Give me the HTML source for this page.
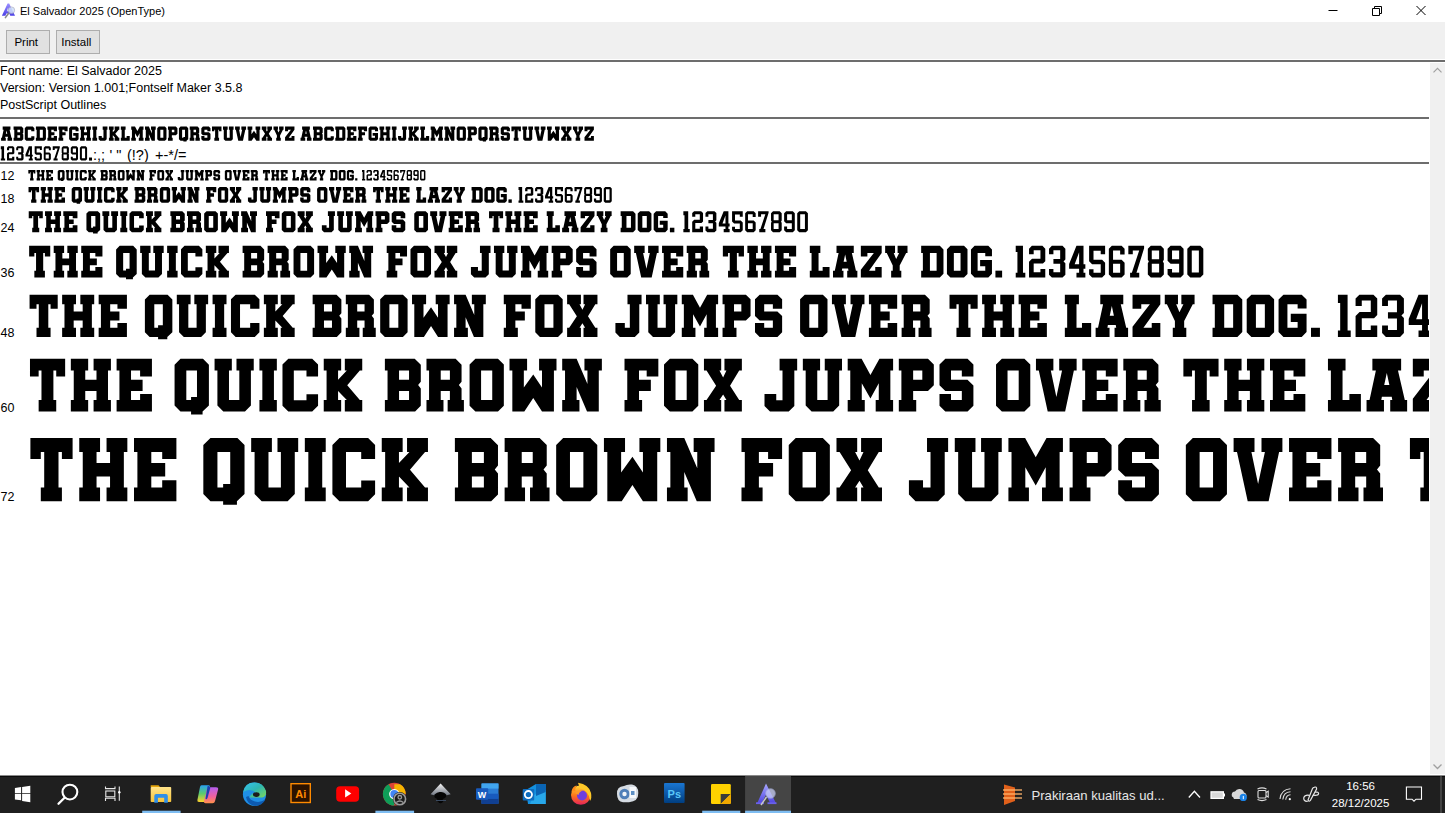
<!DOCTYPE html>
<html><head><meta charset="utf-8">
<style>
*{box-sizing:border-box}
html,body{margin:0;padding:0}
body{width:1445px;height:813px;position:relative;overflow:hidden;background:#fff;font-family:"Liberation Sans",sans-serif;color:#000}
.abs{position:absolute}
#title{left:0;top:0;width:1445px;height:22px;background:#fff}
#ttext{left:20px;top:4px;font-size:11px;line-height:14px;white-space:nowrap}
#toolbar{left:0;top:22px;width:1445px;height:37px;background:#f0f0f0}
.btn{position:absolute;top:30px;height:24px;background:#e1e1e1;border:1px solid #adadad;font-size:11.5px;line-height:22px;text-align:center;padding-right:3.5px}
.sep{position:absolute;left:0;background:#6d6d6d}
.info{position:absolute;left:0;font-size:12.5px;line-height:15px;white-space:nowrap;margin-top:1px}
.sample{position:absolute;left:0;top:63px}
.lab{position:absolute;left:0.5px;font-size:12.5px;line-height:15px;color:#000}
.punc{position:absolute;top:147px;font-size:14.5px;line-height:16px;white-space:nowrap}
#scroll{left:1430px;top:63px;width:15px;height:711px;background:#f0f0f0}
#taskbar{left:0;top:775px;width:1445px;height:38px;background:#1f1f1f;border-top:1px solid #8a8a8a}
.tbt{position:absolute;color:#f2f2f2;font-size:12px;white-space:nowrap}
</style></head><body>
<div class="abs" id="title"></div>
<svg class="abs" style="left:0;top:0" width="20" height="20" viewBox="0 0 20 20">
<defs><linearGradient id="tia" x1="0" y1="0" x2="0" y2="1"><stop offset="0" stop-color="#9a90ff"/><stop offset="1" stop-color="#4b3fe6"/></linearGradient></defs>
<path d="M7.6,3.6H9.2L15,15.8H10.3L9.3,13.6H6.4L5.4,15.8H1.9Z" fill="url(#tia)"/>
<path d="M7.9,8L9,11.3H6.8Z" fill="#fff" opacity="0.8"/>
<circle cx="11.4" cy="10.2" r="3.3" fill="#cfe0fb" opacity="0.85" stroke="#a8a8b8" stroke-width="0.7"/>
<path d="M8.6,13.2L5.4,17.6" stroke="#8a8a8a" stroke-width="1.6" stroke-linecap="round"/>
</svg>
<div class="abs" id="ttext">El Salvador 2025 (OpenType)</div>
<svg class="abs" style="left:1320px;top:0" width="125" height="22">
<path d="M8.5,10.5H17.5" stroke="#000" stroke-width="1"/>
<path d="M52.5,8.5H59.5V15.5H52.5Z M54.5,8.5V6.5H61.5V13.5H59.5" fill="none" stroke="#000" stroke-width="1"/>
<path d="M96.5,6L105.5,15M105.5,6L96.5,15" stroke="#000" stroke-width="1"/>
</svg>
<div class="abs" id="toolbar"></div>
<div class="btn" style="left:6px;width:44px">Print</div>
<div class="btn" style="left:56px;width:44px">Install</div>
<div class="sep" style="top:60px;width:1445px;height:2px"></div>
<div class="info" style="top:63px">Font name: El Salvador 2025</div>
<div class="info" style="top:80px">Version: Version 1.001;Fontself Maker 3.5.8</div>
<div class="info" style="top:97px">PostScript Outlines</div>
<div class="sep" style="top:117px;width:1429px;height:2px"></div>
<svg class="sample" width="1429" height="712" viewBox="0 63 1429 712"><defs><path id="g84" d="M0,0H42.2V21.2H31.5V14.2H28.1V49.6H31.5V63.3H10.4V49.6H13.8V14.2H10.4V21.2H0Z"/><path id="g72" d="M0,0H20.8V14.2H17.3V25.1H30.8V14.2H27.3V0H48.1V14.2H44.6V49.6H48.1V63.3H27.3V49.6H30.8V38.7H17.3V49.6H20.8V63.3H0V49.6H3.5V14.2H0Z"/><path id="g69" d="M0,0H42.4V21.2H28.2V14.2H17.3V25.1H31.2V38.7H17.3V49.6H28.2V42.4H42.4V63.3H0V49.6H3.4V14.2H0Z"/><path id="g81" d="M7.1,0H34.1L41.2,7.1V56.2L33.6,63.3V66.9H19.8V63.3H7.1L0,56.2V7.1Z M14.1,14.2H26.9V46H19.8V49.5H14.1Z"/><path id="g85" d="M0,0H20.7V14.2H17.3V49.5H29.7V14.2H26.3V0H47V14.2H43.6V56.2L36.5,63.3H10.5L3.4,56.2V14.2H0Z"/><path id="g73" d="M0,0H20.9V14.2H17.4V49.6H20.9V63.3H0V49.6H3.5V14.2H0Z"/><path id="g67" d="M7,0H35.7L42.7,7V21.2H28.8V14.2H13.6V49.7H28.8V42.6H42.7V56.3L35.7,63.3H7L0,56.3V7Z"/><path id="g75" d="M0,0H20.9V14.2H17.2V25.1L27.7,14.2H25.3V0H46.2V14.2H43.3L28.2,31.9L43.3,49.6H46.2V63.3H25.3V49.6H27.7L17.2,38.7V49.6H20.9V63.3H0V49.6H3.4V14.2H0Z"/><path id="g66" d="M0,0H35.8L43.1,7.3V27.7L39.9,31.6L43.1,35.6V56.5L36.3,63.3H0V49.6H3.2V14.2H0Z M17,14.2H29V25.1H17Z M17,38.7H29V49.6H17Z"/><path id="g82" d="M0,0H35L42.1,7.1V27.7L38.9,31.6L42.1,35.6V49.6H44.9V63.3H25.4V49.6H28.1V38.7H17.1V49.6H20.4V63.3H0V49.6H3.1V14.2H0Z M17.1,14.2H28.1V25.1H17.1Z"/><path id="g79" d="M7,0H34.1L41.1,7V56.3L34.1,63.3H7L0,56.3V7Z M13.8,14.2H27.2V49.6H13.8Z"/><path id="g87" d="M0,0H21.1V14.2H17.2V34.5L28.5,18.9L39,34.5V14.2H35.5V0H56.4V14.2H53.3V63.3H39L28.5,47.1L17.8,63.3H3.4V14.2H0Z"/><path id="g78" d="M0,0H17.3L30.3,30.4V14.2H26.7V0H47.6V14.2H43.9V63.3H29.8L17.3,34V49.6H20.7V63.3H0V49.6H3.4V14.2H0Z"/><path id="g70" d="M0,0H40.6V21.2H26.6V14.2H17.4V25.1H31.6V38.7H17.4V49.6H21.1V63.3H0V49.6H3.3V14.2H0Z"/><path id="g88" d="M0,0H20.7V14.2H18.6L23,22.5L27,14.2H24.6V0H45.5V14.2H42.3L31.3,32.4L42.3,49.6H45.5V63.3H24.6V49.6H27L23,42.9L18.6,49.6H20.7V63.3H0V49.6H3.1L14.6,32.4L3.1,14.2H0Z"/><path id="g74" d="M18.1,0H39.2V14.2H35.8V56.6L29.1,63.3H6.6L0,56.6V42.4H14.1V49.7H21.6V14.2H18.1Z"/><path id="g77" d="M0,0H16.7L27.3,19.4L38.1,0H54.5V14.2H51.2V49.6H54.5V63.3H33.6V49.6H37.3V29.3L27.3,47.6L16.9,29.3V49.6H20.5V63.3H0V49.6H3.1V14.2H0Z"/><path id="g80" d="M0,0H35L42,7V31.9L35,38.7H17.2V49.6H20.9V63.3H0V49.6H3.1V14.2H0Z M17.2,14.2H28.2V25.2H17.2Z"/><path id="g83" d="M7,0H33.7L40.7,7V21.2H26.8V14.2H13.8V25.1H33.6L40.7,32.1V56.3L33.7,63.3H7L0,56.3V42.4H13.8V49.6H26.8V38.7H7L0,31.8V7Z"/><path id="g86" d="M0,0H20.9V14.2H17.8L24.5,46L31.3,14.2H27.9V0H48.8V14.2H45.5L35,63.3H14.1L3.4,14.2H0Z"/><path id="g76" d="M0,0H21.1V14.2H17.5V49.6H25.7V42.4H39.5V63.3H0V49.6H3.5V14.2H0Z"/><path id="g65" d="M7,0H41.5V14.2H37.7L45.9,49.6H48.7V63.3H28.4V49.6H30.9L30.2,45.5H18.4L17.7,49.6H20.9V63.3H0V49.6H3.6L11.2,14.2H7Z M24.3,17.1L27.4,31.6H21.2Z"/><path id="g90" d="M0,0H41.7V14.2L16.4,49.6H28.8V42.4H41.7V63.3H0V48L26,14.2H13.1V21.2H0Z"/><path id="g89" d="M0,0H19.8V14.2H17.1L22,26.4L28,14.2H24.9V0H44.7V14.2H42L29.1,39.3V49.6H32.3V63.3H12V49.6H15.2V39.3L3.2,14.2H0Z"/><path id="g68" d="M0,0H37.3L44.6,7.3V56L37.3,63.3H0V49.6H3.4V14.2H0Z M17.5,14.2H30.9V49.6H17.5Z"/><path id="g71" d="M7.3,0H34.7L42,7.3V20.7H28.6V14.2H13.3V49.6H28.6V41H18.3V28.5H42V56L34.7,63.3H7.3L0,56V7.3Z"/><path id="g46" d="M0,49.6H13.4V63.3H0Z"/><path id="g49" d="M0,0H14.5V53.7H19.2V63.3H0V53.7H3.4V12.5H0Z"/><path id="g50" d="M5.7,0H26.8L32.5,5.7V30.6L27.8,35.3H9.3V53H22.8V46.2H32.5V63.3H0V31.9L6,25.9H22.8V8.8H9.3V16.8H0V5.7Z"/><path id="g51" d="M5.7,0H27L32.7,5.7V27.5L29,31.2L32.7,34.9V57.6L27,63.3H5.7L0,57.6V46.2H8.8V53H22.3V35.8H8.8V26.5H22.3V8.8H8.8V16.8H0V5.7Z"/><path id="g52" d="M14.7,0H28.8V36.9H32.5V45.6H28.8V53.7H32.5V63.3H14.7V53.7H20V45.6H0V36.3Z M20,12.9V36.9H11.1Z"/><path id="g53" d="M0,0H32V16.7H23.2V9.8H8.8V27.6H26L32,33.6V57.3L26,63.3H6L0,57.3V46.8H8.8V53.6H23.2V36.9H6L0,30.9Z"/><path id="g54" d="M6,0H25.5L31.5,6V17.2H22.6V9.3H8.4V27.6H25.5L31.5,33.6V57.3L25.5,63.3H6L0,57.3V6Z M8.4,35.9H22.6V53.6H8.4Z"/><path id="g55" d="M0,0H31.5V5L16.3,53.6H21.8V63.3H3.5V53.6H7L21.7,9.3H8.9V16.7H0Z"/><path id="g56" d="M6,0H26L32,6V28L30,31.5L32,35V57.3L26,63.3H6L0,57.3V35L2,31.5L0,28V6Z M7.9,9.4H22.6V27H7.9Z M7.9,36H22.6V53.2H7.9Z"/><path id="g57" d="M6,0H26L32,6V57.3L26,63.3H6L0,57.3V46.2H8.9V53.2H23.1V36H6L0,30V6Z M8.9,9.4H23.1V27H8.9Z"/><path id="g48" d="M6,0H26L32,6V57.3L26,63.3H6L0,57.3V6Z M8.9,9.4H23.1V53.2H8.9Z"/></defs><g fill="#000" fill-rule="evenodd"><use href="#g65" transform="translate(1.10,126.56) scale(0.2250)"/><use href="#g66" transform="translate(13.57,126.56) scale(0.2250)"/><use href="#g67" transform="translate(24.77,126.56) scale(0.2250)"/><use href="#g68" transform="translate(35.89,126.56) scale(0.2250)"/><use href="#g69" transform="translate(47.43,126.56) scale(0.2250)"/><use href="#g70" transform="translate(58.48,126.56) scale(0.2250)"/><use href="#g71" transform="translate(69.12,126.56) scale(0.2250)"/><use href="#g72" transform="translate(80.08,126.56) scale(0.2250)"/><use href="#g73" transform="translate(92.41,126.56) scale(0.2250)"/><use href="#g74" transform="translate(98.61,126.56) scale(0.2250)"/><use href="#g75" transform="translate(108.94,126.56) scale(0.2250)"/><use href="#g76" transform="translate(120.84,126.56) scale(0.2250)"/><use href="#g77" transform="translate(131.24,126.56) scale(0.2250)"/><use href="#g78" transform="translate(145.01,126.56) scale(0.2250)"/><use href="#g79" transform="translate(157.23,126.56) scale(0.2250)"/><use href="#g80" transform="translate(167.98,126.56) scale(0.2250)"/><use href="#g81" transform="translate(178.94,126.56) scale(0.2250)"/><use href="#g82" transform="translate(189.72,126.56) scale(0.2250)"/><use href="#g83" transform="translate(201.33,126.56) scale(0.2250)"/><use href="#g84" transform="translate(211.99,126.56) scale(0.2250)"/><use href="#g85" transform="translate(223.00,126.56) scale(0.2250)"/><use href="#g86" transform="translate(235.08,126.56) scale(0.2250)"/><use href="#g87" transform="translate(247.57,126.56) scale(0.2250)"/><use href="#g88" transform="translate(261.76,126.56) scale(0.2250)"/><use href="#g89" transform="translate(273.51,126.56) scale(0.2250)"/><use href="#g90" transform="translate(285.07,126.56) scale(0.2250)"/><use href="#g65" transform="translate(300.53,126.56) scale(0.2250)"/><use href="#g66" transform="translate(313.00,126.56) scale(0.2250)"/><use href="#g67" transform="translate(324.20,126.56) scale(0.2250)"/><use href="#g68" transform="translate(335.31,126.56) scale(0.2250)"/><use href="#g69" transform="translate(346.86,126.56) scale(0.2250)"/><use href="#g70" transform="translate(357.91,126.56) scale(0.2250)"/><use href="#g71" transform="translate(368.55,126.56) scale(0.2250)"/><use href="#g72" transform="translate(379.50,126.56) scale(0.2250)"/><use href="#g73" transform="translate(391.83,126.56) scale(0.2250)"/><use href="#g74" transform="translate(398.04,126.56) scale(0.2250)"/><use href="#g75" transform="translate(408.37,126.56) scale(0.2250)"/><use href="#g76" transform="translate(420.27,126.56) scale(0.2250)"/><use href="#g77" transform="translate(430.67,126.56) scale(0.2250)"/><use href="#g78" transform="translate(444.44,126.56) scale(0.2250)"/><use href="#g79" transform="translate(456.66,126.56) scale(0.2250)"/><use href="#g80" transform="translate(467.41,126.56) scale(0.2250)"/><use href="#g81" transform="translate(478.37,126.56) scale(0.2250)"/><use href="#g82" transform="translate(489.15,126.56) scale(0.2250)"/><use href="#g83" transform="translate(500.76,126.56) scale(0.2250)"/><use href="#g84" transform="translate(511.42,126.56) scale(0.2250)"/><use href="#g85" transform="translate(522.42,126.56) scale(0.2250)"/><use href="#g86" transform="translate(534.51,126.56) scale(0.2250)"/><use href="#g87" transform="translate(546.99,126.56) scale(0.2250)"/><use href="#g88" transform="translate(561.19,126.56) scale(0.2250)"/><use href="#g89" transform="translate(572.94,126.56) scale(0.2250)"/><use href="#g90" transform="translate(584.50,126.56) scale(0.2250)"/><use href="#g49" transform="translate(0.80,146.36) scale(0.2250)"/><use href="#g50" transform="translate(7.01,146.36) scale(0.2250)"/><use href="#g51" transform="translate(16.21,146.36) scale(0.2250)"/><use href="#g52" transform="translate(25.46,146.36) scale(0.2250)"/><use href="#g53" transform="translate(34.66,146.36) scale(0.2250)"/><use href="#g54" transform="translate(43.75,146.36) scale(0.2250)"/><use href="#g55" transform="translate(52.73,146.36) scale(0.2250)"/><use href="#g56" transform="translate(61.71,146.36) scale(0.2250)"/><use href="#g57" transform="translate(70.80,146.36) scale(0.2250)"/><use href="#g48" transform="translate(79.89,146.36) scale(0.2250)"/><use href="#g46" transform="translate(88.98,146.36) scale(0.2250)"/><use href="#g84" transform="translate(28.32,169.95) scale(0.1667)"/><use href="#g72" transform="translate(36.63,169.95) scale(0.1667)"/><use href="#g69" transform="translate(45.94,169.95) scale(0.1667)"/><use href="#g81" transform="translate(57.73,169.95) scale(0.1667)"/><use href="#g85" transform="translate(65.87,169.95) scale(0.1667)"/><use href="#g73" transform="translate(74.99,169.95) scale(0.1667)"/><use href="#g67" transform="translate(79.68,169.95) scale(0.1667)"/><use href="#g75" transform="translate(88.08,169.95) scale(0.1667)"/><use href="#g66" transform="translate(100.51,169.95) scale(0.1667)"/><use href="#g82" transform="translate(108.98,169.95) scale(0.1667)"/><use href="#g79" transform="translate(117.74,169.95) scale(0.1667)"/><use href="#g87" transform="translate(125.87,169.95) scale(0.1667)"/><use href="#g78" transform="translate(136.59,169.95) scale(0.1667)"/><use href="#g70" transform="translate(149.26,169.95) scale(0.1667)"/><use href="#g79" transform="translate(157.30,169.95) scale(0.1667)"/><use href="#g88" transform="translate(165.42,169.95) scale(0.1667)"/><use href="#g74" transform="translate(177.74,169.95) scale(0.1667)"/><use href="#g85" transform="translate(185.54,169.95) scale(0.1667)"/><use href="#g77" transform="translate(194.67,169.95) scale(0.1667)"/><use href="#g80" transform="translate(205.06,169.95) scale(0.1667)"/><use href="#g83" transform="translate(213.34,169.95) scale(0.1667)"/><use href="#g79" transform="translate(224.84,169.95) scale(0.1667)"/><use href="#g86" transform="translate(232.96,169.95) scale(0.1667)"/><use href="#g69" transform="translate(242.39,169.95) scale(0.1667)"/><use href="#g82" transform="translate(250.74,169.95) scale(0.1667)"/><use href="#g84" transform="translate(262.95,169.95) scale(0.1667)"/><use href="#g72" transform="translate(271.26,169.95) scale(0.1667)"/><use href="#g69" transform="translate(280.57,169.95) scale(0.1667)"/><use href="#g76" transform="translate(292.37,169.95) scale(0.1667)"/><use href="#g65" transform="translate(300.22,169.95) scale(0.1667)"/><use href="#g90" transform="translate(309.63,169.95) scale(0.1667)"/><use href="#g89" transform="translate(317.85,169.95) scale(0.1667)"/><use href="#g68" transform="translate(330.04,169.95) scale(0.1667)"/><use href="#g79" transform="translate(338.75,169.95) scale(0.1667)"/><use href="#g71" transform="translate(346.88,169.95) scale(0.1667)"/><use href="#g46" transform="translate(355.15,169.95) scale(0.1667)"/><use href="#g49" transform="translate(362.02,169.95) scale(0.1667)"/><use href="#g50" transform="translate(366.52,169.95) scale(0.1667)"/><use href="#g51" transform="translate(373.28,169.95) scale(0.1667)"/><use href="#g52" transform="translate(380.08,169.95) scale(0.1667)"/><use href="#g53" transform="translate(386.84,169.95) scale(0.1667)"/><use href="#g54" transform="translate(393.52,169.95) scale(0.1667)"/><use href="#g55" transform="translate(400.11,169.95) scale(0.1667)"/><use href="#g56" transform="translate(406.70,169.95) scale(0.1667)"/><use href="#g57" transform="translate(413.38,169.95) scale(0.1667)"/><use href="#g48" transform="translate(420.06,169.95) scale(0.1667)"/><use href="#g84" transform="translate(28.52,186.98) scale(0.2500)"/><use href="#g72" transform="translate(40.73,186.98) scale(0.2500)"/><use href="#g69" transform="translate(54.40,186.98) scale(0.2500)"/><use href="#g81" transform="translate(71.71,186.98) scale(0.2500)"/><use href="#g85" transform="translate(83.66,186.98) scale(0.2500)"/><use href="#g73" transform="translate(97.06,186.98) scale(0.2500)"/><use href="#g67" transform="translate(103.95,186.98) scale(0.2500)"/><use href="#g75" transform="translate(116.27,186.98) scale(0.2500)"/><use href="#g66" transform="translate(134.54,186.98) scale(0.2500)"/><use href="#g82" transform="translate(146.96,186.98) scale(0.2500)"/><use href="#g79" transform="translate(159.84,186.98) scale(0.2500)"/><use href="#g87" transform="translate(171.76,186.98) scale(0.2500)"/><use href="#g78" transform="translate(187.51,186.98) scale(0.2500)"/><use href="#g70" transform="translate(206.12,186.98) scale(0.2500)"/><use href="#g79" transform="translate(217.92,186.98) scale(0.2500)"/><use href="#g88" transform="translate(229.85,186.98) scale(0.2500)"/><use href="#g74" transform="translate(247.94,186.98) scale(0.2500)"/><use href="#g85" transform="translate(259.39,186.98) scale(0.2500)"/><use href="#g77" transform="translate(272.79,186.98) scale(0.2500)"/><use href="#g80" transform="translate(288.05,186.98) scale(0.2500)"/><use href="#g83" transform="translate(300.21,186.98) scale(0.2500)"/><use href="#g79" transform="translate(317.10,186.98) scale(0.2500)"/><use href="#g86" transform="translate(329.02,186.98) scale(0.2500)"/><use href="#g69" transform="translate(342.87,186.98) scale(0.2500)"/><use href="#g82" transform="translate(355.12,186.98) scale(0.2500)"/><use href="#g84" transform="translate(373.06,186.98) scale(0.2500)"/><use href="#g72" transform="translate(385.26,186.98) scale(0.2500)"/><use href="#g69" transform="translate(398.93,186.98) scale(0.2500)"/><use href="#g76" transform="translate(416.25,186.98) scale(0.2500)"/><use href="#g65" transform="translate(427.77,186.98) scale(0.2500)"/><use href="#g90" transform="translate(441.60,186.98) scale(0.2500)"/><use href="#g89" transform="translate(453.67,186.98) scale(0.2500)"/><use href="#g68" transform="translate(471.56,186.98) scale(0.2500)"/><use href="#g79" transform="translate(484.36,186.98) scale(0.2500)"/><use href="#g71" transform="translate(496.29,186.98) scale(0.2500)"/><use href="#g46" transform="translate(508.44,186.98) scale(0.2500)"/><use href="#g49" transform="translate(518.52,186.98) scale(0.2500)"/><use href="#g50" transform="translate(525.13,186.98) scale(0.2500)"/><use href="#g51" transform="translate(535.06,186.98) scale(0.2500)"/><use href="#g52" transform="translate(545.04,186.98) scale(0.2500)"/><use href="#g53" transform="translate(554.97,186.98) scale(0.2500)"/><use href="#g54" transform="translate(564.78,186.98) scale(0.2500)"/><use href="#g55" transform="translate(574.46,186.98) scale(0.2500)"/><use href="#g56" transform="translate(584.14,186.98) scale(0.2500)"/><use href="#g57" transform="translate(593.94,186.98) scale(0.2500)"/><use href="#g48" transform="translate(603.75,186.98) scale(0.2500)"/><use href="#g84" transform="translate(28.73,211.20) scale(0.3333)"/><use href="#g72" transform="translate(45.03,211.20) scale(0.3333)"/><use href="#g69" transform="translate(63.30,211.20) scale(0.3333)"/><use href="#g81" transform="translate(86.43,211.20) scale(0.3333)"/><use href="#g85" transform="translate(102.40,211.20) scale(0.3333)"/><use href="#g73" transform="translate(120.30,211.20) scale(0.3333)"/><use href="#g67" transform="translate(129.50,211.20) scale(0.3333)"/><use href="#g75" transform="translate(145.97,211.20) scale(0.3333)"/><use href="#g66" transform="translate(170.37,211.20) scale(0.3333)"/><use href="#g82" transform="translate(186.97,211.20) scale(0.3333)"/><use href="#g79" transform="translate(204.17,211.20) scale(0.3333)"/><use href="#g87" transform="translate(220.10,211.20) scale(0.3333)"/><use href="#g78" transform="translate(241.13,211.20) scale(0.3333)"/><use href="#g70" transform="translate(266.00,211.20) scale(0.3333)"/><use href="#g79" transform="translate(281.77,211.20) scale(0.3333)"/><use href="#g88" transform="translate(297.70,211.20) scale(0.3333)"/><use href="#g74" transform="translate(321.87,211.20) scale(0.3333)"/><use href="#g85" transform="translate(337.17,211.20) scale(0.3333)"/><use href="#g77" transform="translate(355.07,211.20) scale(0.3333)"/><use href="#g80" transform="translate(375.47,211.20) scale(0.3333)"/><use href="#g83" transform="translate(391.70,211.20) scale(0.3333)"/><use href="#g79" transform="translate(414.27,211.20) scale(0.3333)"/><use href="#g86" transform="translate(430.20,211.20) scale(0.3333)"/><use href="#g69" transform="translate(448.70,211.20) scale(0.3333)"/><use href="#g82" transform="translate(465.07,211.20) scale(0.3333)"/><use href="#g84" transform="translate(489.03,211.20) scale(0.3333)"/><use href="#g72" transform="translate(505.33,211.20) scale(0.3333)"/><use href="#g69" transform="translate(523.60,211.20) scale(0.3333)"/><use href="#g76" transform="translate(546.73,211.20) scale(0.3333)"/><use href="#g65" transform="translate(562.13,211.20) scale(0.3333)"/><use href="#g90" transform="translate(580.60,211.20) scale(0.3333)"/><use href="#g89" transform="translate(596.73,211.20) scale(0.3333)"/><use href="#g68" transform="translate(620.63,211.20) scale(0.3333)"/><use href="#g79" transform="translate(637.73,211.20) scale(0.3333)"/><use href="#g71" transform="translate(653.67,211.20) scale(0.3333)"/><use href="#g46" transform="translate(669.90,211.20) scale(0.3333)"/><use href="#g49" transform="translate(683.37,211.20) scale(0.3333)"/><use href="#g50" transform="translate(692.20,211.20) scale(0.3333)"/><use href="#g51" transform="translate(705.47,211.20) scale(0.3333)"/><use href="#g52" transform="translate(718.80,211.20) scale(0.3333)"/><use href="#g53" transform="translate(732.07,211.20) scale(0.3333)"/><use href="#g54" transform="translate(745.17,211.20) scale(0.3333)"/><use href="#g55" transform="translate(758.10,211.20) scale(0.3333)"/><use href="#g56" transform="translate(771.03,211.20) scale(0.3333)"/><use href="#g57" transform="translate(784.13,211.20) scale(0.3333)"/><use href="#g48" transform="translate(797.23,211.20) scale(0.3333)"/><use href="#g84" transform="translate(29.15,245.85) scale(0.5000)"/><use href="#g72" transform="translate(53.71,245.85) scale(0.5000)"/><use href="#g69" transform="translate(81.24,245.85) scale(0.5000)"/><use href="#g81" transform="translate(116.11,245.85) scale(0.5000)"/><use href="#g85" transform="translate(140.17,245.85) scale(0.5000)"/><use href="#g73" transform="translate(167.15,245.85) scale(0.5000)"/><use href="#g67" transform="translate(181.01,245.85) scale(0.5000)"/><use href="#g75" transform="translate(205.83,245.85) scale(0.5000)"/><use href="#g66" transform="translate(242.60,245.85) scale(0.5000)"/><use href="#g82" transform="translate(267.62,245.85) scale(0.5000)"/><use href="#g79" transform="translate(293.54,245.85) scale(0.5000)"/><use href="#g87" transform="translate(317.55,245.85) scale(0.5000)"/><use href="#g78" transform="translate(349.25,245.85) scale(0.5000)"/><use href="#g70" transform="translate(386.72,245.85) scale(0.5000)"/><use href="#g79" transform="translate(410.48,245.85) scale(0.5000)"/><use href="#g88" transform="translate(434.50,245.85) scale(0.5000)"/><use href="#g74" transform="translate(470.92,245.85) scale(0.5000)"/><use href="#g85" transform="translate(493.97,245.85) scale(0.5000)"/><use href="#g77" transform="translate(520.95,245.85) scale(0.5000)"/><use href="#g80" transform="translate(551.69,245.85) scale(0.5000)"/><use href="#g83" transform="translate(576.16,245.85) scale(0.5000)"/><use href="#g79" transform="translate(610.17,245.85) scale(0.5000)"/><use href="#g86" transform="translate(634.18,245.85) scale(0.5000)"/><use href="#g69" transform="translate(662.06,245.85) scale(0.5000)"/><use href="#g82" transform="translate(686.73,245.85) scale(0.5000)"/><use href="#g84" transform="translate(722.85,245.85) scale(0.5000)"/><use href="#g72" transform="translate(747.41,245.85) scale(0.5000)"/><use href="#g69" transform="translate(774.94,245.85) scale(0.5000)"/><use href="#g76" transform="translate(809.80,245.85) scale(0.5000)"/><use href="#g65" transform="translate(833.01,245.85) scale(0.5000)"/><use href="#g90" transform="translate(860.84,245.85) scale(0.5000)"/><use href="#g89" transform="translate(885.15,245.85) scale(0.5000)"/><use href="#g68" transform="translate(921.17,245.85) scale(0.5000)"/><use href="#g79" transform="translate(946.94,245.85) scale(0.5000)"/><use href="#g71" transform="translate(970.96,245.85) scale(0.5000)"/><use href="#g46" transform="translate(995.42,245.85) scale(0.5000)"/><use href="#g49" transform="translate(1015.72,245.85) scale(0.5000)"/><use href="#g50" transform="translate(1029.03,245.85) scale(0.5000)"/><use href="#g51" transform="translate(1049.02,245.85) scale(0.5000)"/><use href="#g52" transform="translate(1069.11,245.85) scale(0.5000)"/><use href="#g53" transform="translate(1089.11,245.85) scale(0.5000)"/><use href="#g54" transform="translate(1108.85,245.85) scale(0.5000)"/><use href="#g55" transform="translate(1128.34,245.85) scale(0.5000)"/><use href="#g56" transform="translate(1147.83,245.85) scale(0.5000)"/><use href="#g57" transform="translate(1167.58,245.85) scale(0.5000)"/><use href="#g48" transform="translate(1187.32,245.85) scale(0.5000)"/><use href="#g84" transform="translate(29.57,294.70) scale(0.6667)"/><use href="#g72" transform="translate(62.14,294.70) scale(0.6667)"/><use href="#g69" transform="translate(98.65,294.70) scale(0.6667)"/><use href="#g81" transform="translate(144.89,294.70) scale(0.6667)"/><use href="#g85" transform="translate(176.80,294.70) scale(0.6667)"/><use href="#g73" transform="translate(212.57,294.70) scale(0.6667)"/><use href="#g67" transform="translate(230.96,294.70) scale(0.6667)"/><use href="#g75" transform="translate(263.87,294.70) scale(0.6667)"/><use href="#g66" transform="translate(312.64,294.70) scale(0.6667)"/><use href="#g82" transform="translate(345.81,294.70) scale(0.6667)"/><use href="#g79" transform="translate(380.19,294.70) scale(0.6667)"/><use href="#g87" transform="translate(412.03,294.70) scale(0.6667)"/><use href="#g78" transform="translate(454.07,294.70) scale(0.6667)"/><use href="#g70" transform="translate(503.77,294.70) scale(0.6667)"/><use href="#g79" transform="translate(535.28,294.70) scale(0.6667)"/><use href="#g88" transform="translate(567.12,294.70) scale(0.6667)"/><use href="#g74" transform="translate(615.42,294.70) scale(0.6667)"/><use href="#g85" transform="translate(646.00,294.70) scale(0.6667)"/><use href="#g77" transform="translate(681.78,294.70) scale(0.6667)"/><use href="#g80" transform="translate(722.55,294.70) scale(0.6667)"/><use href="#g83" transform="translate(754.99,294.70) scale(0.6667)"/><use href="#g79" transform="translate(800.09,294.70) scale(0.6667)"/><use href="#g86" transform="translate(831.94,294.70) scale(0.6667)"/><use href="#g69" transform="translate(868.91,294.70) scale(0.6667)"/><use href="#g82" transform="translate(901.62,294.70) scale(0.6667)"/><use href="#g84" transform="translate(949.52,294.70) scale(0.6667)"/><use href="#g72" transform="translate(982.10,294.70) scale(0.6667)"/><use href="#g69" transform="translate(1018.61,294.70) scale(0.6667)"/><use href="#g76" transform="translate(1064.84,294.70) scale(0.6667)"/><use href="#g65" transform="translate(1095.62,294.70) scale(0.6667)"/><use href="#g90" transform="translate(1132.53,294.70) scale(0.6667)"/><use href="#g89" transform="translate(1164.77,294.70) scale(0.6667)"/><use href="#g68" transform="translate(1212.54,294.70) scale(0.6667)"/><use href="#g79" transform="translate(1246.71,294.70) scale(0.6667)"/><use href="#g71" transform="translate(1278.56,294.70) scale(0.6667)"/><use href="#g46" transform="translate(1311.00,294.70) scale(0.6667)"/><use href="#g49" transform="translate(1337.92,294.70) scale(0.6667)"/><use href="#g50" transform="translate(1355.57,294.70) scale(0.6667)"/><use href="#g51" transform="translate(1382.09,294.70) scale(0.6667)"/><use href="#g52" transform="translate(1408.73,294.70) scale(0.6667)"/><use href="#g53" transform="translate(1435.25,294.70) scale(0.6667)"/><use href="#g54" transform="translate(1461.43,294.70) scale(0.6667)"/><use href="#g55" transform="translate(1487.28,294.70) scale(0.6667)"/><use href="#g56" transform="translate(1513.13,294.70) scale(0.6667)"/><use href="#g57" transform="translate(1539.31,294.70) scale(0.6667)"/><use href="#g48" transform="translate(1565.49,294.70) scale(0.6667)"/><use href="#g84" transform="translate(29.98,358.75) scale(0.8333)"/><use href="#g72" transform="translate(70.83,358.75) scale(0.8333)"/><use href="#g69" transform="translate(116.60,358.75) scale(0.8333)"/><use href="#g81" transform="translate(174.57,358.75) scale(0.8333)"/><use href="#g85" transform="translate(214.57,358.75) scale(0.8333)"/><use href="#g73" transform="translate(259.43,358.75) scale(0.8333)"/><use href="#g67" transform="translate(282.48,358.75) scale(0.8333)"/><use href="#g75" transform="translate(323.74,358.75) scale(0.8333)"/><use href="#g66" transform="translate(384.88,358.75) scale(0.8333)"/><use href="#g82" transform="translate(426.48,358.75) scale(0.8333)"/><use href="#g79" transform="translate(469.58,358.75) scale(0.8333)"/><use href="#g87" transform="translate(509.50,358.75) scale(0.8333)"/><use href="#g78" transform="translate(562.20,358.75) scale(0.8333)"/><use href="#g70" transform="translate(624.51,358.75) scale(0.8333)"/><use href="#g79" transform="translate(664.02,358.75) scale(0.8333)"/><use href="#g88" transform="translate(703.95,358.75) scale(0.8333)"/><use href="#g74" transform="translate(764.50,358.75) scale(0.8333)"/><use href="#g85" transform="translate(802.84,358.75) scale(0.8333)"/><use href="#g77" transform="translate(847.69,358.75) scale(0.8333)"/><use href="#g80" transform="translate(898.81,358.75) scale(0.8333)"/><use href="#g83" transform="translate(939.49,358.75) scale(0.8333)"/><use href="#g79" transform="translate(996.03,358.75) scale(0.8333)"/><use href="#g86" transform="translate(1035.96,358.75) scale(0.8333)"/><use href="#g69" transform="translate(1082.31,358.75) scale(0.8333)"/><use href="#g82" transform="translate(1123.33,358.75) scale(0.8333)"/><use href="#g84" transform="translate(1183.38,358.75) scale(0.8333)"/><use href="#g72" transform="translate(1224.22,358.75) scale(0.8333)"/><use href="#g69" transform="translate(1270.00,358.75) scale(0.8333)"/><use href="#g76" transform="translate(1327.96,358.75) scale(0.8333)"/><use href="#g65" transform="translate(1366.55,358.75) scale(0.8333)"/><use href="#g90" transform="translate(1412.82,358.75) scale(0.8333)"/><use href="#g89" transform="translate(1453.25,358.75) scale(0.8333)"/><use href="#g68" transform="translate(1513.14,358.75) scale(0.8333)"/><use href="#g79" transform="translate(1555.99,358.75) scale(0.8333)"/><use href="#g71" transform="translate(1595.91,358.75) scale(0.8333)"/><use href="#g46" transform="translate(1636.59,358.75) scale(0.8333)"/><use href="#g49" transform="translate(1670.33,358.75) scale(0.8333)"/><use href="#g50" transform="translate(1692.46,358.75) scale(0.8333)"/><use href="#g51" transform="translate(1725.71,358.75) scale(0.8333)"/><use href="#g52" transform="translate(1759.12,358.75) scale(0.8333)"/><use href="#g53" transform="translate(1792.36,358.75) scale(0.8333)"/><use href="#g54" transform="translate(1825.19,358.75) scale(0.8333)"/><use href="#g55" transform="translate(1857.59,358.75) scale(0.8333)"/><use href="#g56" transform="translate(1890.00,358.75) scale(0.8333)"/><use href="#g57" transform="translate(1922.83,358.75) scale(0.8333)"/><use href="#g48" transform="translate(1955.65,358.75) scale(0.8333)"/><use href="#g84" transform="translate(30.40,437.90) scale(1.0000)"/><use href="#g72" transform="translate(79.25,437.90) scale(1.0000)"/><use href="#g69" transform="translate(134.00,437.90) scale(1.0000)"/><use href="#g81" transform="translate(203.33,437.90) scale(1.0000)"/><use href="#g85" transform="translate(251.18,437.90) scale(1.0000)"/><use href="#g73" transform="translate(304.83,437.90) scale(1.0000)"/><use href="#g67" transform="translate(332.40,437.90) scale(1.0000)"/><use href="#g75" transform="translate(381.75,437.90) scale(1.0000)"/><use href="#g66" transform="translate(454.88,437.90) scale(1.0000)"/><use href="#g82" transform="translate(504.63,437.90) scale(1.0000)"/><use href="#g79" transform="translate(556.17,437.90) scale(1.0000)"/><use href="#g87" transform="translate(603.93,437.90) scale(1.0000)"/><use href="#g78" transform="translate(666.96,437.90) scale(1.0000)"/><use href="#g70" transform="translate(741.49,437.90) scale(1.0000)"/><use href="#g79" transform="translate(788.74,437.90) scale(1.0000)"/><use href="#g88" transform="translate(836.49,437.90) scale(1.0000)"/><use href="#g74" transform="translate(908.92,437.90) scale(1.0000)"/><use href="#g85" transform="translate(954.77,437.90) scale(1.0000)"/><use href="#g77" transform="translate(1008.42,437.90) scale(1.0000)"/><use href="#g80" transform="translate(1069.56,437.90) scale(1.0000)"/><use href="#g83" transform="translate(1118.21,437.90) scale(1.0000)"/><use href="#g79" transform="translate(1185.84,437.90) scale(1.0000)"/><use href="#g86" transform="translate(1233.60,437.90) scale(1.0000)"/><use href="#g69" transform="translate(1289.04,437.90) scale(1.0000)"/><use href="#g82" transform="translate(1338.09,437.90) scale(1.0000)"/><use href="#g84" transform="translate(1409.92,437.90) scale(1.0000)"/><use href="#g72" transform="translate(1458.77,437.90) scale(1.0000)"/><use href="#g69" transform="translate(1513.52,437.90) scale(1.0000)"/><use href="#g76" transform="translate(1582.85,437.90) scale(1.0000)"/><use href="#g65" transform="translate(1629.00,437.90) scale(1.0000)"/><use href="#g90" transform="translate(1684.34,437.90) scale(1.0000)"/><use href="#g89" transform="translate(1732.70,437.90) scale(1.0000)"/><use href="#g68" transform="translate(1804.32,437.90) scale(1.0000)"/><use href="#g79" transform="translate(1855.57,437.90) scale(1.0000)"/><use href="#g71" transform="translate(1903.33,437.90) scale(1.0000)"/><use href="#g46" transform="translate(1951.98,437.90) scale(1.0000)"/><use href="#g49" transform="translate(1992.34,437.90) scale(1.0000)"/><use href="#g50" transform="translate(2018.81,437.90) scale(1.0000)"/><use href="#g51" transform="translate(2058.57,437.90) scale(1.0000)"/><use href="#g52" transform="translate(2098.53,437.90) scale(1.0000)"/><use href="#g53" transform="translate(2138.29,437.90) scale(1.0000)"/><use href="#g54" transform="translate(2177.55,437.90) scale(1.0000)"/><use href="#g55" transform="translate(2216.31,437.90) scale(1.0000)"/><use href="#g56" transform="translate(2255.07,437.90) scale(1.0000)"/><use href="#g57" transform="translate(2294.33,437.90) scale(1.0000)"/><use href="#g48" transform="translate(2333.59,437.90) scale(1.0000)"/></g></svg>
<div class="punc" style="left:93px">:,;</div><div class="punc" style="left:109.5px">' "</div><div class="punc" style="left:127px">(!?)</div><div class="punc" style="left:155px">+-*/=</div>
<div class="sep" style="top:162px;width:1429px;height:2px"></div>
<div class="lab" style="top:169.3px">12</div><div class="lab" style="top:191.9px">18</div><div class="lab" style="top:221.1px">24</div><div class="lab" style="top:266.2px">36</div><div class="lab" style="top:325.8px">48</div><div class="lab" style="top:400.6px">60</div><div class="lab" style="top:490.1px">72</div>
<div class="abs" id="scroll"></div>
<svg class="abs" style="left:1430px;top:63px" width="15" height="711">
<path d="M3.5,9.3L7.5,5.3L11.5,9.3" fill="none" stroke="#a0a0a0" stroke-width="1.2"/>
<path d="M3.5,701.5L7.5,705.5L11.5,701.5" fill="none" stroke="#a0a0a0" stroke-width="1.3"/>
</svg>
<div class="abs" id="taskbar"></div>
<svg class="abs" style="left:0;top:775px" width="1445" height="38" viewBox="0 775 1445 38">
<defs>
<linearGradient id="edg" x1="0" y1="0" x2="1" y2="1"><stop offset="0" stop-color="#36c2f0"/><stop offset="0.5" stop-color="#2fb7b0"/><stop offset="1" stop-color="#7fd857"/></linearGradient>
<linearGradient id="cpl" x1="0" y1="0" x2="0" y2="1"><stop offset="0" stop-color="#27a1f5"/><stop offset="0.5" stop-color="#5ccb6c"/><stop offset="1" stop-color="#ffd12a"/></linearGradient>
<linearGradient id="cpr" x1="0" y1="0" x2="0" y2="1"><stop offset="0" stop-color="#b45ef0"/><stop offset="0.6" stop-color="#f2629a"/><stop offset="1" stop-color="#ff9248"/></linearGradient>
<linearGradient id="fld" x1="0" y1="0" x2="0" y2="1"><stop offset="0" stop-color="#ffe38a"/><stop offset="1" stop-color="#f8c43a"/></linearGradient>
<linearGradient id="psg" x1="0" y1="0" x2="0" y2="1"><stop offset="0" stop-color="#1a76d2"/><stop offset="1" stop-color="#003e80"/></linearGradient>
<linearGradient id="ffx" x1="0" y1="0" x2="0" y2="1"><stop offset="0" stop-color="#ffd93a"/><stop offset="0.5" stop-color="#ff7a1a"/><stop offset="1" stop-color="#e6235a"/></linearGradient>
<linearGradient id="ink" x1="0" y1="0" x2="0" y2="1"><stop offset="0" stop-color="#f4f4f4"/><stop offset="1" stop-color="#6d7480"/></linearGradient>
<linearGradient id="fva" x1="0" y1="0" x2="0" y2="1"><stop offset="0" stop-color="#a9a9ff"/><stop offset="1" stop-color="#4a3fe0"/></linearGradient>
</defs>
<rect x="0" y="775" width="1445" height="1" fill="#8a8a8a"/><rect x="0" y="776" width="1445" height="1" fill="#0b0b0b"/>
<!-- windows -->
<g fill="#fff">
<path d="M14.9,787.9L21.1,787.1V793.2H14.9Z"/><path d="M22.1,786.9L30.3,785.8V793.2H22.1Z"/>
<path d="M14.9,794.1H21.1V800.3L14.9,799.4Z"/><path d="M22.1,794.1H30.3V802.2L22.1,801Z"/>
</g>
<!-- search -->
<circle cx="69.9" cy="792.1" r="7.4" fill="none" stroke="#fff" stroke-width="2.1"/>
<path d="M58.5,803.8L64.3,798" stroke="#fff" stroke-width="2.3" stroke-linecap="round"/>
<!-- task view -->
<g fill="none" stroke="#e8e8e8" stroke-width="1.1">
<path d="M105.5,786.5V788.6H115V786.5"/><rect x="105.8" y="791" width="9" height="5.8"/><path d="M105.5,801V798.2H115V801"/>
<path d="M119.3,786.6V800.8"/>
</g>
<circle cx="119.3" cy="792.3" r="1.2" fill="#fff"/>
<!-- file explorer -->
<path d="M150.7,785.3H158.5L160,787H150.7Z" fill="#e5a50a"/>
<rect x="150.7" y="787" width="20.5" height="15.1" rx="0.8" fill="url(#fld)"/>
<path d="M154.3,802.7V796Q154.3,794.1 156.2,794.1H166Q167.8,794.1 167.8,796V802.7H164.2V797.7H157.9V802.7Z" fill="#2f8fe8"/>
<rect x="142.2" y="810.7" width="38.4" height="2.3" fill="#7ebdf2"/>
<!-- copilot -->
<path d="M201.5,785.2H208.5Q210.5,785.2 210,787.5L206.5,800.5Q206,802 204.5,802H199Q197,802 197.4,800L200,787Q200.3,785.2 201.5,785.2Z" fill="url(#cpl)"/>
<path d="M208.8,787.2H216Q218.6,787.2 218.1,789.5L215,801.3Q214.5,803.3 212.5,803.3H205.5Q203.5,803.3 204,801.2L207,789Q207.4,787.2 208.8,787.2Z" fill="url(#cpr)"/>
<path d="M207.5,786.3Q209.5,785.3 210.3,787.8L207.5,798Q206.5,800 205.5,798.8Z" fill="#1d3fb0"/>
<!-- edge -->
<circle cx="254.5" cy="794.2" r="11.6" fill="#1f8fe6"/>
<path d="M243.2,792.5Q244.5,782.6 254.5,782.6Q263,782.6 266,791Q266.8,796.5 262,797.5H249.5Q251,793 256,792.8Q252,789 246.5,790.5Q244.5,791.2 243.2,792.5Z" fill="url(#edg)"/>
<path d="M246,797Q247,804.5 255,805.8Q262,806 265.5,799.5Q260,803 255,801.5Q249.5,800 248.5,796Z" fill="#0d5ab0"/>
<ellipse cx="256.3" cy="794.6" rx="3.3" ry="2.3" fill="#1c1c1c"/>
<!-- illustrator -->
<rect x="291" y="783.7" width="19.3" height="18.8" fill="#2a1200" stroke="#ff8a00" stroke-width="1.4"/>
<text x="300.7" y="798.3" font-family="Liberation Sans" font-weight="bold" font-size="11" fill="#ff8a00" text-anchor="middle">Ai</text>
<!-- youtube -->
<rect x="336.2" y="786.2" width="22.9" height="15.6" rx="4" fill="#ff0000"/>
<path d="M345.1,789.3L351.3,793.5L345.1,797.6Z" fill="#fff"/>
<!-- chrome -->
<circle cx="394.3" cy="794.1" r="11.4" fill="#db4437"/>
<path d="M394.3,794.1L382.9,794.1A11.4,11.4 0 0 0 394.3,805.5Z" fill="#0f9d58"/>
<path d="M394.3,794.1L388.6,784.2A11.4,11.4 0 0 0 382.9,794.1L388.6,804Z" fill="#0f9d58"/>
<path d="M394.3,794.1L405.7,794.1A11.4,11.4 0 0 0 400,784.2L394.3,784.2Z" fill="#f4b400"/>
<circle cx="394.3" cy="794.1" r="5.2" fill="#fff"/><circle cx="394.3" cy="794.1" r="4" fill="#4285f4"/>
<circle cx="399.8" cy="799" r="7" fill="#1c1c1c"/><circle cx="399.8" cy="799" r="5.8" fill="none" stroke="#9a9a9a" stroke-width="1.6"/>
<circle cx="399.8" cy="797.3" r="1.8" fill="none" stroke="#9a9a9a" stroke-width="1.3"/><path d="M396.3,802.5Q399.8,799.5 403.3,802.5" fill="none" stroke="#9a9a9a" stroke-width="1.3"/>
<rect x="375.4" y="810.7" width="38.7" height="2.3" fill="#7ebdf2"/>
<!-- inkscape -->
<path d="M440.6,783.6L450.7,794.2L446,795.5L440.6,792L435,795.5L430.6,794.2Z" fill="url(#ink)"/>
<path d="M434.5,794.5Q437.5,791.5 440.6,792Q444.5,792 446.5,795Q446,798.5 442.5,799Q444.5,801.5 441.5,803Q439,803.8 438,801.5Q436,801 437.5,799Q433.5,798 434.5,794.5Z" fill="#050505"/>
<path d="M436,800.5H446" stroke="#3a4a60" stroke-width="1"/>
<!-- word -->
<rect x="481.5" y="783.4" width="17" height="20.6" rx="1" fill="#2b7cd3"/>
<rect x="481.5" y="783.4" width="17" height="5.2" fill="#41a5ee"/><rect x="481.5" y="793.7" width="17" height="5.2" fill="#185abd"/><rect x="481.5" y="798.9" width="17" height="5.1" fill="#103f91"/>
<rect x="476" y="788.3" width="12.2" height="11.5" rx="1" fill="#185abd"/>
<text x="482.1" y="797.8" font-family="Liberation Sans" font-weight="bold" font-size="9" fill="#fff" text-anchor="middle">W</text>
<!-- outlook -->
<path d="M526,790L536,784H545.7V804H528Z" fill="#1490df"/>
<path d="M534,795L545.7,790V804H530Z" fill="#28a8ea"/>
<path d="M536,784H545.7V792L536,796Z" fill="#0a64b4"/>
<rect x="522.7" y="788.9" width="11.5" height="11.5" rx="1" fill="#0f6cbd"/>
<circle cx="528.4" cy="794.6" r="3.6" fill="none" stroke="#fff" stroke-width="1.8"/>
<!-- firefox -->
<circle cx="580.8" cy="795" r="9.8" fill="url(#ffx)"/>
<path d="M578,782.8Q589,784.5 591,793Q592,798 590,801Q589,790 580,788.5Z" fill="#ffc928"/>
<path d="M571.5,791.5Q572.5,786 577,785.5Q574.5,788.5 575.5,791Z" fill="#ff8a1a"/>
<circle cx="582" cy="795.5" r="5" fill="#6f3ee0"/>
<path d="M575,793Q578,789.5 583,790.5Q579,791.5 578.5,795Z" fill="#ff9a2a"/>
<!-- disk app -->
<path d="M617,794Q616.5,786.5 624,786Q627,784 632,784.5Q638.3,785.5 638.3,793Q638.5,801.5 629,802.2H623Q617,801.5 617,794Z" fill="#d5dbe2"/>
<circle cx="624.5" cy="794" r="5.2" fill="#4f7fb8"/><circle cx="624.5" cy="794" r="2.2" fill="#f2f5f8"/>
<rect x="629.5" y="787" width="6.5" height="11" fill="#f4f7fa"/><rect x="631" y="791" width="3.5" height="4" fill="#5d8fc4"/>
<!-- photoshop -->
<rect x="664" y="783" width="20.6" height="20.1" rx="1" fill="url(#psg)"/>
<text x="674.3" y="797.6" font-family="Liberation Sans" font-weight="bold" font-size="11" fill="#5ac8f8" text-anchor="middle">Ps</text>
<!-- sticky -->
<rect x="711" y="784" width="19.8" height="20.1" rx="1.3" fill="#ffd100"/>
<path d="M720.7,804.1V794H730.8Z" fill="#3a3a3a"/><path d="M720.7,804.1L730.8,794V802.8Q730.8,804.1 729.5,804.1Z" fill="#f0a800"/>
<rect x="702.2" y="810.7" width="38.1" height="2.3" fill="#7ebdf2"/>
<!-- active font viewer -->
<rect x="745.1" y="776" width="45.9" height="37" fill="#454545"/>
<path d="M766,783.5L776.4,804.1H770.5L766,794.5L761.5,804.1H756.8Z" fill="url(#fva)"/>
<rect x="756" y="802.3" width="8" height="1.8" fill="#6a60e8"/><rect x="767.5" y="802.3" width="9" height="1.8" fill="#6a60e8"/>
<circle cx="770.5" cy="793.5" r="4.8" fill="#c9cff5" opacity="0.75" stroke="#aab3e0" stroke-width="0.8"/>
<path d="M766.5,797L761,805" stroke="#c8c8c8" stroke-width="1.5"/>
<rect x="745.1" y="810.7" width="45.9" height="2.3" fill="#7ebdf2"/>
<!-- weather -->
<path d="M1004,784.5L1015,787.5V801L1004,805Z" fill="#e0601a"/>
<g fill="none" stroke="#ffb36b" stroke-width="1.3"><path d="M1003,790H1022"/><path d="M1003,794H1022"/><path d="M1003,798H1022"/></g>
<text x="1031.5" y="799.9" font-family="Liberation Sans" font-size="13.1" fill="#e6e6e6">Prakiraan kualitas ud...</text>
<!-- tray -->
<path d="M1188.8,797.5L1194.4,791.2L1200,797.5" fill="none" stroke="#fff" stroke-width="1.3"/>
<rect x="1211" y="791.8" width="12.4" height="6.6" fill="#d8d8d8" stroke="#fff" stroke-width="1.2"/><rect x="1223.5" y="793.5" width="1.5" height="3" fill="#fff"/>
<path d="M1233,797Q1231.5,797 1231.7,794.5Q1232,791.5 1235,791.5Q1236.5,788.8 1239.5,789Q1243,789.3 1244,792.5Q1246.5,793 1246.5,796Q1246.5,798.5 1244,799H1234Z" fill="#d8d8d8"/>
<circle cx="1243.3" cy="797.4" r="3.6" fill="#1a82e6"/><rect x="1242.8" y="795.9" width="1" height="3.3" fill="#fff"/>
<g fill="none" stroke="#ddd" stroke-width="1.1">
<rect x="1258" y="790.5" width="8" height="7.5" rx="1"/><path d="M1266,792.5L1268.2,791.3V797L1266,795.8"/>
<path d="M1257.5,789Q1262,786.8 1266.5,789"/><path d="M1257.5,799.5Q1262,801.7 1266.5,799.5"/>
<path d="M1280,799Q1281,789.5 1290.5,788.8"/><path d="M1282.8,799.5Q1283.5,792.3 1290.5,791.8"/><path d="M1285.7,799.8Q1286.2,795 1290.5,794.8"/>
</g>
<circle cx="1289.8" cy="799.2" r="1.1" fill="#fff"/>
<g fill="none" stroke="#e6e6e6" stroke-width="1.2" stroke-linecap="round"><path d="M1314.2,787.3Q1316.8,786.3 1316.6,789L1310.4,800.4Q1308.8,802 1308,800L1312.5,788.5Q1313,787.6 1314.2,787.3Z"/><path d="M1307.2,801.4Q1303.2,801 1303.8,797.6Q1305,794.6 1309.2,795.3"/><path d="M1313.2,795.2Q1318.3,795.8 1318.6,793.6Q1318.5,791.6 1315.6,792.2"/></g>
<text x="1360.6" y="789.7" font-family="Liberation Sans" font-size="11.5" fill="#fff" text-anchor="middle">16:56</text>
<text x="1360.6" y="806.5" font-family="Liberation Sans" font-size="11.5" fill="#fff" text-anchor="middle">28/12/2025</text>
<path d="M1406.4,787H1421.5V799.2H1416L1414,801.2L1412,799.2H1406.4Z" fill="none" stroke="#fff" stroke-width="1.1"/>
<rect x="1440.4" y="776" width="1.2" height="37" fill="#5a5a5a"/>
</svg>

</body></html>
